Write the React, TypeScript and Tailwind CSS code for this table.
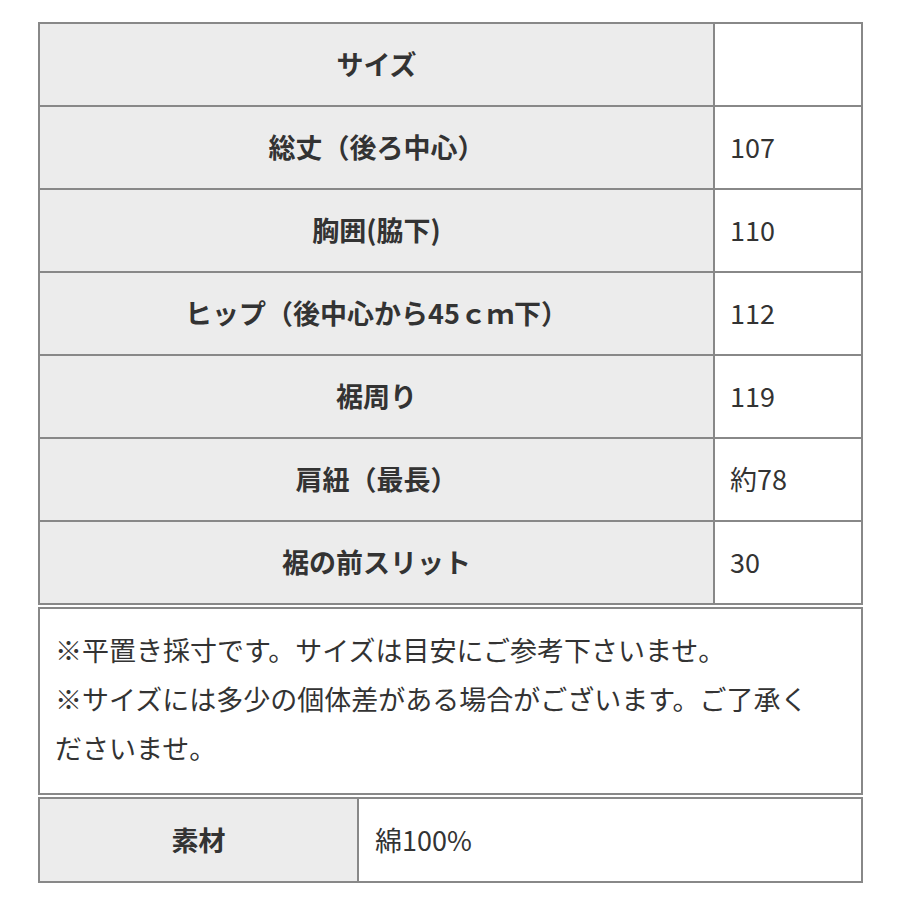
const rows: [string, string][] = [
  ['サイズ', ''],
  ['総丈（後ろ中心）', '107'],
  ['胸囲(脇下)', '110'],
  ['ヒップ（後中心から45ｃｍ下）', '112'],
  ['裾周り', '119'],
  ['肩紐（最長）', '約78'],
  ['裾の前スリット', '30'],
];

export default function App() {
  return (
    <div
      className="w-[900px] h-[900px] bg-white pt-[22px] pl-[38px] text-[#333] text-[27px]"
      style={{ fontFamily: '"Noto Sans CJK JP", "Noto Sans", sans-serif' }}
    >
      <div className="w-[825px] flex flex-col gap-[2px]">
        {/* size table */}
        <div className="border-2 border-[#888]">
          {rows.map(([label, value], i) => (
            <div
              key={label}
              className={`flex h-[81px] ${i > 0 ? 'border-t-2 border-[#888]' : ''} box-content`}
            >
              <div className="w-[673px] bg-[#ececec] border-r-2 border-[#888] flex items-center justify-center font-bold box-content">
                {label}
              </div>
              <div className="flex-1 flex items-center pl-[15px]">{value}</div>
            </div>
          ))}
        </div>

        {/* notes */}
        <div className="border-2 border-[#888] h-[188px] pt-[16px] pl-[15px] pr-[30px] leading-[49px]">
          <p>※平置き採寸です。サイズは目安にご参考下さいませ。</p>
          <p>※サイズには多少の個体差がある場合がございます。ご了承くださいませ。</p>
        </div>

        {/* material */}
        <div className="border-2 border-[#888] flex h-[86px]">
          <div className="w-[317px] bg-[#ececec] border-r-2 border-[#888] flex items-center justify-center font-bold box-content">
            素材
          </div>
          <div className="flex-1 flex items-center pl-[16px]">綿100%</div>
        </div>
      </div>
    </div>
  );
}
